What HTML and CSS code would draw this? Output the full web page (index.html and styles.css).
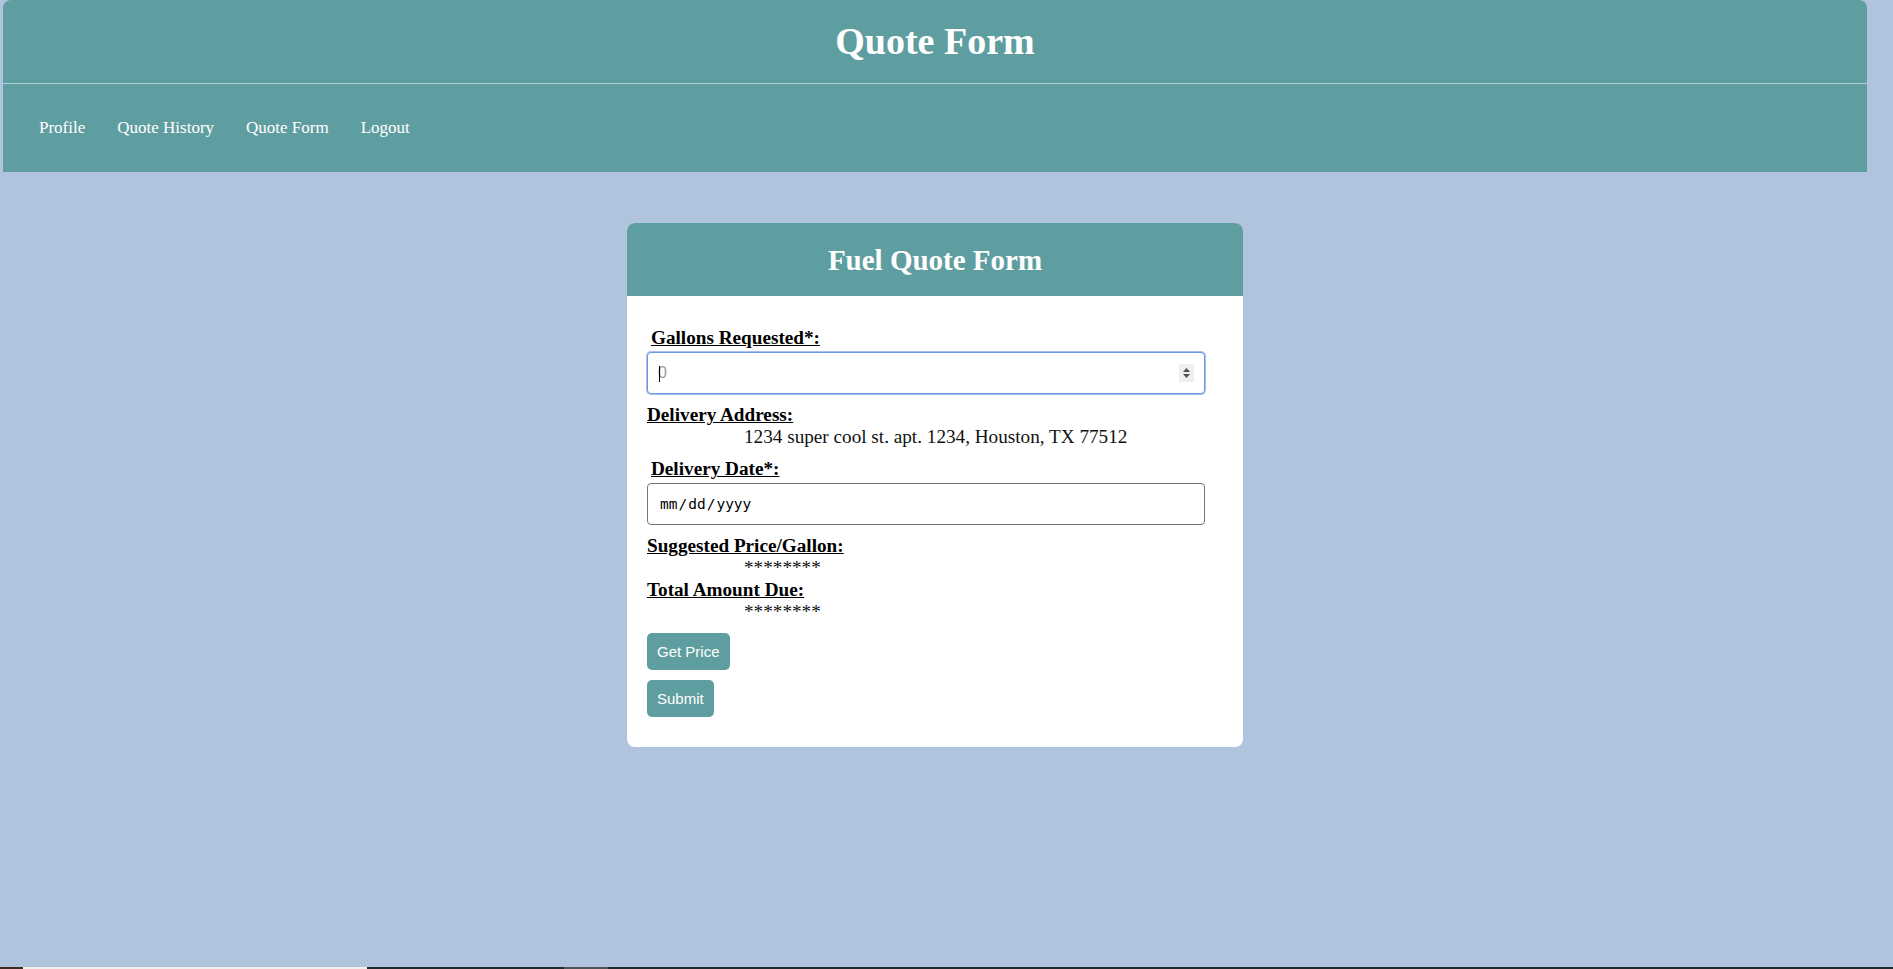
FILE: index.html
```html
<!DOCTYPE html>
<html lang="en">
<head>
<meta charset="utf-8">
<title>Quote Form</title>
<link rel="stylesheet" href="styles.css">
</head>
<body>
  <header class="site-header">
    <h1 class="site-title">Quote Form</h1>
    <nav class="site-nav">
      <a class="nav-link" href="#">Profile</a>
      <a class="nav-link" href="#">Quote History</a>
      <a class="nav-link" href="#">Quote Form</a>
      <a class="nav-link" href="#">Logout</a>
    </nav>
  </header>

  <main class="page-main">
    <section class="card">
      <div class="card-head">
        <h2 class="card-title">Fuel Quote Form</h2>
      </div>
      <form class="card-body">
        <label class="field-label field-label-in" for="gallons">Gallons Requested*:</label>
        <div class="input-wrap">
          <input class="text-input focused" id="gallons" type="number" placeholder="0">
          <span class="caret"></span>
          <span class="spinner">
            <svg width="15" height="18" viewBox="0 0 15 18">
              <rect width="15" height="18" fill="#efefef"/>
              <path d="M7.5 4 L11 8 L4 8 Z" fill="#4f4f4f"/>
              <path d="M7.5 14 L11 10 L4 10 Z" fill="#4f4f4f"/>
            </svg>
          </span>
        </div>

        <div class="field-label">Delivery Address:</div>
        <div class="field-value">1234 super cool st. apt. 1234, Houston, TX 77512</div>

        <label class="field-label field-label-in" for="date">Delivery Date*:</label>
        <input class="text-input date-input" id="date" type="date">

        <div class="field-label">Suggested Price/Gallon:</div>
        <div class="field-value">********</div>

        <div class="field-label field-label-tight">Total Amount Due:</div>
        <div class="field-value">********</div>

        <button class="btn" type="button">Get Price</button>
        <button class="btn" type="submit">Submit</button>
      </form>
    </section>
  </main>

  <div class="os-strip">
    <span class="seg seg-brown"></span>
    <span class="seg seg-light"></span>
    <span class="seg seg-dark1"></span>
    <span class="seg seg-gray"></span>
    <span class="seg seg-dark2"></span>
  </div>
</body>
</html>
```

FILE: styles.css
```css
html, body {
  margin: 0;
  padding: 0;
}

body {
  background: #b0c4de;
  font-family: "Liberation Serif", "Times New Roman", serif;
  min-height: 100vh;
  display: flex;
  flex-direction: column;
}

.site-header {
  width: 1864px;
  margin-left: 3px;
  background: #5f9ea0;
  border-radius: 8px 8px 0 0;
  color: #fff;
}

.site-title {
  margin: 0;
  padding: 19px 0 20px;
  font-size: 38px;
  font-weight: bold;
  text-align: center;
  border-bottom: 1px solid #b3d2d4;
}

.site-nav {
  height: 88px;
  display: flex;
  align-items: center;
  padding-left: 20px;
}

.nav-link {
  color: #fff;
  text-decoration: none;
  font-size: 17px;
  padding: 0 16px;
}

.page-main {
  width: 1864px;
  margin-left: 3px;
  padding-top: 51px;
  flex: 1;
}

.card {
  width: 616px;
  margin: 0 auto;
  background: #fff;
  border-radius: 8px;
  overflow: hidden;
}

.card-head {
  background: #5f9ea0;
  height: 73px;
  display: flex;
  align-items: center;
  justify-content: center;
}

.card-title {
  margin: 0;
  color: #fff;
  font-size: 29px;
  font-weight: bold;
  line-height: 32px;
}

.card-body {
  padding: 31px 20px 30px;
  display: flex;
  flex-direction: column;
  align-items: flex-start;
  font-size: 19.2px;
  line-height: 22px;
  color: #000;
}

.field-label {
  font-weight: bold;
  text-decoration: underline;
  margin-top: 10px;
}

.field-label-in {
  margin-left: 4px;
}

.card-body > .field-label:first-child,
.field-label-tight {
  margin-top: 0;
}

.field-value {
  padding-left: 97px;
  color: #111;
}

.input-wrap {
  position: relative;
  margin-top: 3px;
}

.text-input {
  box-sizing: border-box;
  width: 558px;
  height: 42px;
  border: 1px solid #767676;
  border-radius: 4px;
  padding: 0 10px;
  font-family: "Liberation Sans", Arial, sans-serif;
  font-size: 16px;
  background: #fff;
  color: #000;
  outline: none;
  margin: 0;
}

.text-input::placeholder {
  color: #9a9a9a;
}

.text-input.focused {
  border-color: #6a98e4;
  box-shadow: 0 0 0 1px #a7c1ee;
}

input[type=number] {
  -moz-appearance: textfield;
}

input[type=number]::-webkit-inner-spin-button,
input[type=number]::-webkit-outer-spin-button {
  -webkit-appearance: none;
  margin: 0;
}

.caret {
  position: absolute;
  left: 12px;
  top: 14px;
  width: 1px;
  height: 16px;
  background: #000;
}

.spinner {
  position: absolute;
  right: 11px;
  top: 12px;
  width: 15px;
  height: 18px;
  display: block;
}

.spinner svg {
  display: block;
}

.date-input {
  margin-top: 3px;
  font-family: "DejaVu Sans Mono", "Liberation Mono", monospace;
  font-size: 14.5px;
  padding: 0 11px;
}

.date-input::-webkit-calendar-picker-indicator {
  display: none;
}

.btn {
  margin-top: 10px;
  background: #5f9ea0;
  color: #fff;
  border: none;
  border-radius: 5px;
  padding: 10px;
  font-family: "Liberation Sans", Arial, sans-serif;
  font-size: 15px;
  line-height: 17px;
  cursor: pointer;
}

.os-strip {
  height: 2px;
  display: flex;
}

.seg {
  display: block;
  height: 2px;
}

.seg-brown { width: 23px; background: #3b2a22; }
.seg-light { width: 344px; background: #f2f0ec; }
.seg-dark1 { width: 197px; background: #1d2a2e; }
.seg-gray  { width: 44px; background: #4c5659; }
.seg-dark2 { flex: 1; background: #1d2a2e; }
```
